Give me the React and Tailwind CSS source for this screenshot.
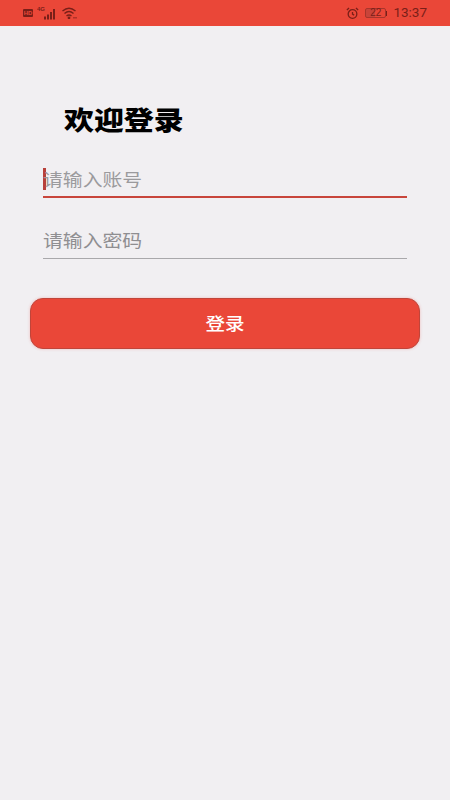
export default function App() {
  const cjk = { fontFamily: '"Noto Sans CJK SC", sans-serif' };
  return (
    <div className="w-[450px] h-[800px] bg-[#f1eff2] flex flex-col overflow-hidden" style={cjk}>
      <div className="h-[26px] bg-[#ea4738] flex items-center justify-between pl-[23px] pr-[23px] text-[#7a1f18]">
        <div className="flex items-center">
          <div className="w-[10px] h-[8px] bg-[#7a1f18] rounded-[1px] text-[6px] leading-[8px] text-center font-bold text-[#ea4738]" style={{ fontFamily: '"Liberation Sans", sans-serif' }}>HD</div>
          <svg width="20" height="14" viewBox="0 0 20 14" className="ml-[4px]">
            <text x="0" y="5" fontSize="6" fontWeight="700" fill="#7a1f18" fontFamily="Liberation Sans">4G</text>
            <g fill="#7a1f18">
              <rect x="7" y="10.5" width="2" height="3" />
              <rect x="10" y="8.5" width="2" height="5" />
              <rect x="13" y="6" width="2" height="7.5" />
              <rect x="16" y="3" width="2" height="10.5" />
            </g>
          </svg>
          <svg width="16" height="12" viewBox="0 0 16 12" fill="none" stroke="#7a1f18" strokeWidth="1.4" className="ml-[5px]">
            <path d="M0.5 4 Q7 -1.5 13.5 4" />
            <path d="M2.5 6.5 Q7 2.5 11.5 6.5" />
            <path d="M4.5 9 Q7 7 9.5 9" />
            <circle cx="7" cy="10.8" r="0.7" fill="#7a1f18" />
            <path d="M11.5 10.8 h4" strokeDasharray="1 1" />
          </svg>
        </div>
        <div className="flex items-center">
          <svg width="13" height="13" viewBox="0 0 12 12" fill="none" stroke="#7a1f18" strokeWidth="1.2" className="mr-[6px]">
            <circle cx="6" cy="6.5" r="4" />
            <path d="M6 4.5 V6.5 L7.5 7.5" />
            <path d="M0.8 2.8 L2.8 1 M11.2 2.8 L9.2 1" />
          </svg>
          <div className="w-[21px] h-[10px] border border-[#a8352b] rounded-[2px] text-[10px] leading-[8px] text-center bg-[linear-gradient(90deg,#c9443a_0%,#c9443a_45%,transparent_45%)]" style={{ fontFamily: '"Liberation Sans", sans-serif' }}>
            22
          </div>
          <div className="w-[1px] h-[5px] bg-[#7a1f18] mr-[6px]" />
          <span className="text-[13.5px] leading-none" style={{ fontFamily: '"Roboto", sans-serif' }}>13:37</span>
        </div>
      </div>

      <div className="px-[43px] pt-[76px]">
        <div className="pl-[21px] h-[34px]">
          <h1 className="inline-block origin-left scale-x-[1.15] text-[26px] leading-[34px] font-black text-black">欢迎登录</h1>
        </div>

        <div className="mt-[25px] h-[37px] border-b-2 border-[#c8453c] flex items-center relative">
          <div className="absolute left-0 top-[7px] w-[3px] h-[22px] bg-[#b8403a]" />
          <span className="inline-block origin-left scale-x-[1.15] text-[17.25px] text-[#9b9a9d] leading-none">请输入账号</span>
        </div>

        <div className="mt-[25px] h-[36px] border-b border-[#a9a8ab] flex items-center">
          <span className="inline-block origin-left scale-x-[1.15] text-[17.25px] text-[#8f8e91] leading-none pb-[2px]">请输入密码</span>
        </div>
      </div>

      <div className="mx-[30px] mt-[39px] h-[51px] pb-[3px] rounded-[13px] bg-[#ea4738] border border-[#c0453a] shadow-[0_0_3px_rgba(234,71,56,0.3)] flex items-center justify-center text-white">
        <span className="inline-block scale-x-[1.15] text-[17px] leading-none font-medium">登录</span>
      </div>
    </div>
  );
}
